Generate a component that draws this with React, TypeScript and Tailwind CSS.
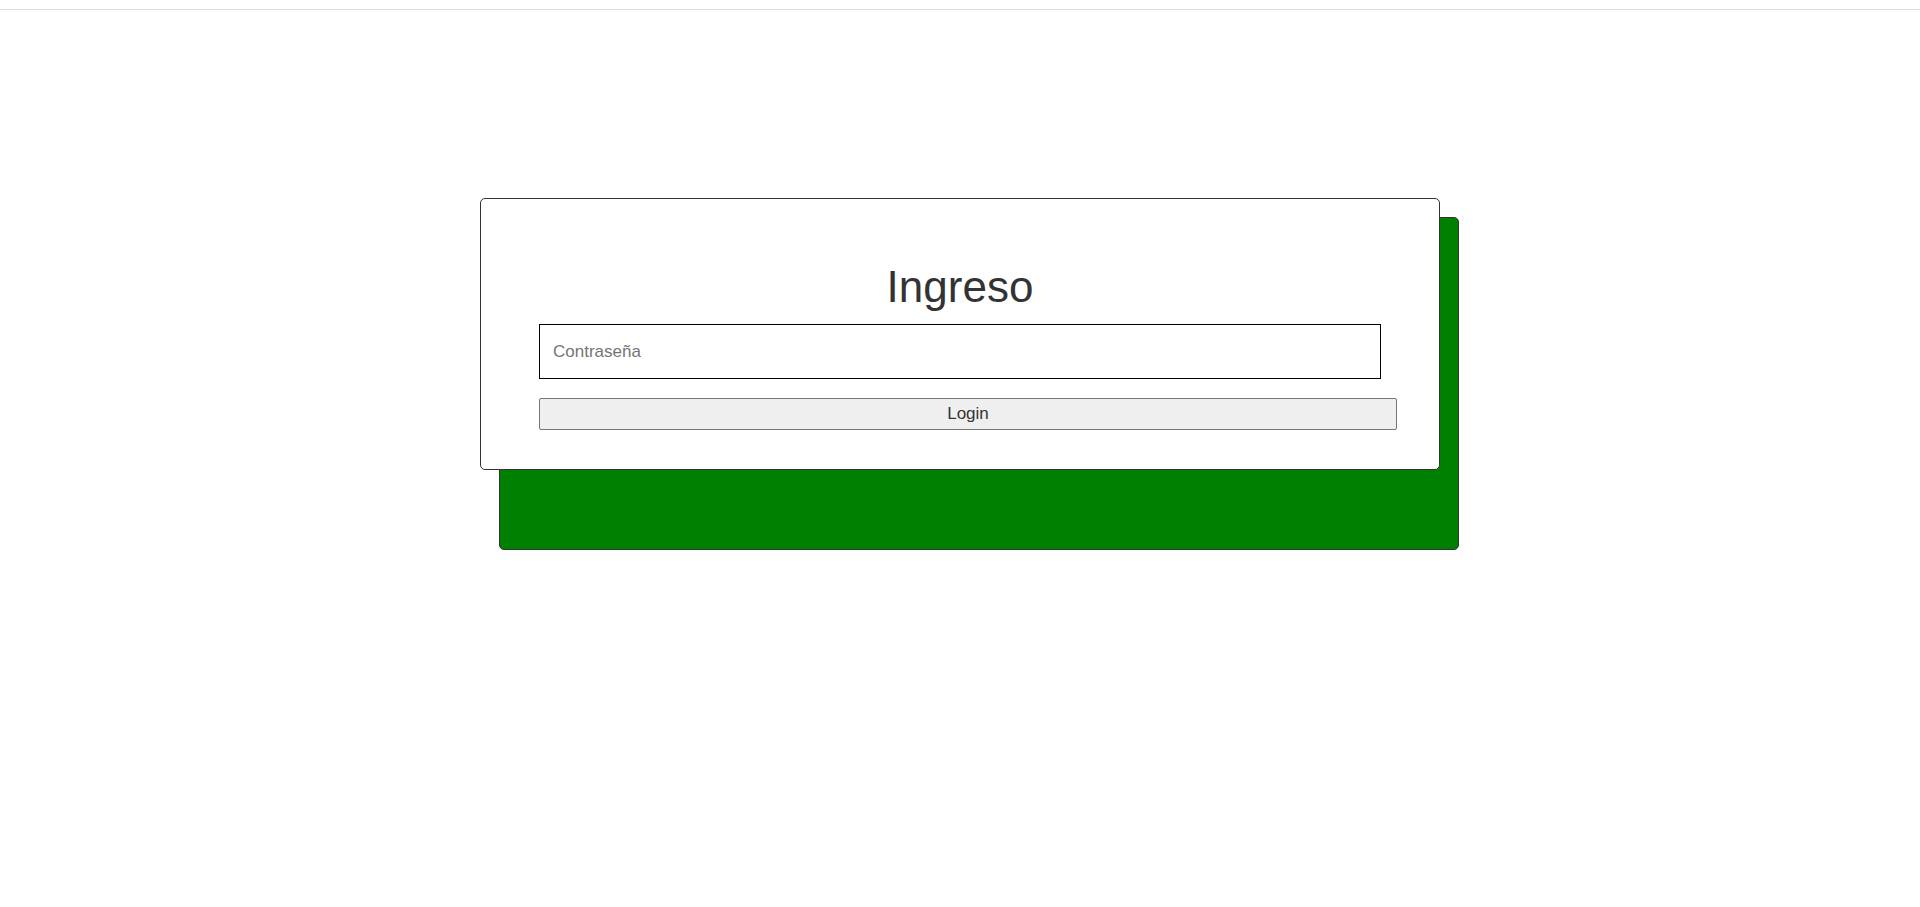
import React from "react";

export default function App() {
  return (
    <div className="min-h-[907px] bg-white" style={{ fontFamily: '"Liberation Sans", Arial, sans-serif' }}>
      <div className="h-[10px] border-b border-[#dddddd]" />
      <div className="relative mx-auto mt-[188px] w-[960px]">
        <div className="absolute left-[19px] top-[19px] h-[333px] w-[960px] rounded-[5px] border border-[#333333] bg-[#008000]" />
        <div className="relative flex h-[272px] w-[960px] flex-col rounded-[5px] border border-[#333333] bg-white pl-[58px] pr-[58px] pt-[63px]">
          <h1 className="text-center text-[44px] leading-[50px] text-[#333333]">Ingreso</h1>
          <input
            type="password"
            placeholder="Contraseña"
            className="mt-[12px] h-[55px] w-[842px] border border-black bg-white px-[13px] text-[17px] text-[#333333] outline-none placeholder:text-[#757575]"
          />
          <button className="mt-[19px] h-[32px] w-[858px] shrink-0 rounded-[2px] border border-[#767676] bg-[#efefef] text-[17px] leading-[20px] text-[#333333]">
            Login
          </button>
        </div>
      </div>
    </div>
  );
}
